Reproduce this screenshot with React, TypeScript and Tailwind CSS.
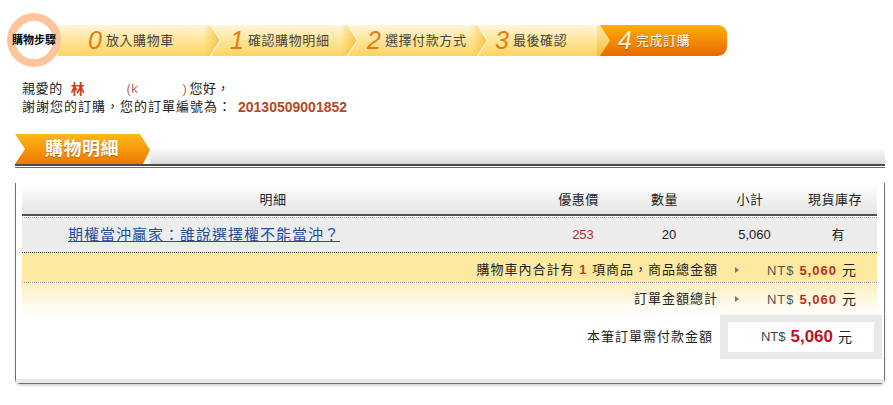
import React from "react";

// chevron shading at the end of each yellow step
function Chevron({ id }: { id: string }) {
  return (
    <svg width="18" height="31" viewBox="0 0 18 31" className="block shrink-0">
      <defs>
        <linearGradient id={id} x1="0" y1="0" x2="1" y2="0">
          <stop offset="0" stopColor="#f8c540" stopOpacity="0" />
          <stop offset="1" stopColor="#f5bd3e" stopOpacity="0.85" />
        </linearGradient>
      </defs>
      <polygon points="0,0 7,0 17,15.5 7,31 0,31" fill={`url(#${id})`} />
      <polyline points="7.5,0 17.5,15.5 7.5,31" fill="none" stroke="#fff7dc" strokeWidth="1.2" />
    </svg>
  );
}

function Step({ n, label, className }: { n: string; label: string; className: string }) {
  return (
    <div className={`flex h-full shrink-0 items-center ${className}`}>
      <span className="mr-[4px] text-[25px] italic leading-none text-[#e47c12]">{n}</span>
      <span className="text-[13px] leading-none tracking-[0.6px] text-[#444]">{label}</span>
    </div>
  );
}

function Arrow() {
  return (
    <div className="flex w-[38px] justify-center">
      <span className="block h-0 w-0 border-y-[3px] border-l-[4px] border-y-transparent border-l-[#777]" />
    </div>
  );
}

function Amount() {
  return (
    <div className="w-[101px] text-right whitespace-nowrap">
      <span className="text-[13px] text-[#555]">NT$</span>
      <span className="ml-[5px] text-[13px] font-bold text-[#b8321c]">5,060</span>
      <span className="ml-[5px] text-[14px]">元</span>
    </div>
  );
}

export default function App() {
  return (
    <div className="h-[405px] w-[893px] overflow-hidden bg-white text-[13px] text-[#222] [font-family:'Liberation_Sans','Noto_Sans_CJK_TC',sans-serif]">
      {/* STEPS */}
      <div className="flex items-center pl-[7px] pt-[13px]">
        <div className="relative z-10 flex h-[54px] w-[54px] shrink-0 items-center justify-center rounded-full border-[8px] border-[#fcc59c] bg-white">
          <span className="whitespace-nowrap text-[11px] font-bold leading-none text-black">購物步驟</span>
        </div>
        <div className="-ml-[3px] flex h-[31px]">
          <div className="flex h-full bg-gradient-to-b from-[#fff6da] via-[#ffe597] to-[#fdd462]">
            <Step n="0" label="放入購物車" className="w-[145px] pl-[30px]" />
            <Chevron id="c0" />
            <Step n="1" label="確認購物明細" className="w-[119px] pl-[9px]" />
            <Chevron id="c1" />
            <Step n="2" label="選擇付款方式" className="w-[112px] pl-[9px]" />
            <Chevron id="c2" />
            <Step n="3" label="最後確認" className="w-[109px] pl-[7px]" />
          </div>
          <div className="flex h-full w-[130px] items-center rounded-r-[9px] bg-gradient-to-b from-[#fdae0a] to-[#e96800]">
            <svg width="14" height="31" viewBox="0 0 14 31" className="block shrink-0">
              <defs>
                <linearGradient id="tip" x1="0" y1="0" x2="0" y2="1">
                  <stop offset="0" stopColor="#fdeaa8" />
                  <stop offset="1" stopColor="#f6be3a" />
                </linearGradient>
              </defs>
              <polygon points="0,0 3,0 13,15.5 3,31 0,31" fill="url(#tip)" />
            </svg>
            <span className="ml-[7px] mr-[4px] text-[25px] italic leading-none text-[#fbeede] [text-shadow:0_1px_1px_rgba(120,50,0,0.4)]">4</span>
            <span className="text-[13px] leading-none tracking-[0.6px] text-white [text-shadow:0_1px_1px_rgba(120,50,0,0.4)]">完成訂購</span>
          </div>
        </div>
      </div>

      {/* GREETING */}
      <div className="mt-[13px] pl-[22px] text-[13px] leading-[18px]">
        <div className="flex items-center tracking-[0.6px]">
          <span>親愛的</span>
          <span className="ml-[8px] text-[14px] font-bold text-[#c2401c]">林</span>
          <span className="w-[41px]" />
          <span className="text-[#c7655a]">(k</span>
          <span className="w-[44px]" />
          <span className="text-[#c7655a]">)</span>
          <span className="ml-[2px]">您好，</span>
        </div>
        <div className="flex items-center tracking-[1px]">
          <span>謝謝您的訂購，您的訂單編號為：</span>
          <span className="ml-[6px] text-[14px] font-bold tracking-normal text-[#b9471c]">20130509001852</span>
        </div>
      </div>

      {/* SECTION TITLE */}
      <div className="ml-[15px] mr-[8px] mt-[18px]">
        <div className="flex h-[30px] items-end">
          <div className="flex h-[30px] w-[135px] shrink-0 items-center bg-gradient-to-b from-[#fcb817] to-[#ef7800] pl-[30px] [clip-path:polygon(0_0,125px_0,135px_16px,128px_30px,0_30px,10px_15px)]">
            <span className="text-[18px] font-bold leading-none tracking-[0.5px] text-white [text-shadow:0_1px_1px_rgba(140,60,0,0.5)]">購物明細</span>
          </div>
          <div className="h-[15px] flex-1 rounded-tr-[3px] bg-gradient-to-b from-[#fafafa] to-[#dcdcdc]" />
        </div>
        <div className="h-[2px] bg-[#4a4a4a]" />
        <div className="mt-[1px] h-[1px] bg-[#6a6a6a]" />
      </div>

      {/* DETAIL BOX */}
      <div className="ml-[15px] mt-[15px] flex h-[201px] w-[870px] flex-col rounded-b-[5px] border-x border-b border-[#707070] shadow-[0_2px_2px_rgba(0,0,0,0.15)]">
        <div className="pl-[6px] pr-[7px] pt-[2px]">
          {/* header */}
          <div className="grid h-[29px] grid-cols-[513px_87px_85px_86px_84px] items-center bg-gradient-to-b from-white to-[#e4e4e4] text-center tracking-[0.5px]">
            <div className="pr-[11px]">明細</div>
            <div>優惠價</div>
            <div>數量</div>
            <div>小計</div>
            <div>現貨庫存</div>
          </div>
          <div className="h-[2px] bg-[#505050]" />
          <div className="mt-[1px] h-0 border-t border-dotted border-[#999]" />

          {/* item */}
          <div className="grid h-[34px] grid-cols-[513px_87px_85px_86px_84px] items-center bg-[#ececec] text-center">
            <div className="pl-[46px] text-left">
              <a href="#" className="text-[15px] tracking-[1px] text-[#1b4f9c] underline">
                期權當沖贏家：誰說選擇權不能當沖？
              </a>
            </div>
            <div className="pl-[9px] text-[#a83232]">253</div>
            <div className="pl-[9px]">20</div>
            <div className="pl-[9px]">5,060</div>
            <div className="pl-[6px]">有</div>
          </div>
          <div className="h-0 border-t border-dotted border-[#333]" />

          {/* totals */}
          <div className="flex h-[29px] items-center bg-[#fee9a0] pr-[20px] pt-[5px] tracking-[1px]">
            <div className="flex-1 text-right">
              購物車內合計有 <span className="font-bold text-[#c2401c]">1</span> 項商品，商品總金額
            </div>
            <Arrow />
            <Amount />
          </div>
          <div className="h-0 border-t border-dotted border-[#999]" />
          <div className="flex h-[32px] items-center bg-gradient-to-b from-[#fdefbf] to-white pr-[20px] tracking-[1px]">
            <div className="flex-1 text-right">訂單金額總計</div>
            <Arrow />
            <Amount />
          </div>

          {/* pay */}
          <div className="-mr-[5px] flex h-[44px] items-center">
            <div className="flex-1 pr-[7px] text-right tracking-[1px]">本筆訂單需付款金額</div>
            <div className="h-[44px] w-[162px] bg-[#e9e9e9] px-[8px] py-[7px]">
              <div className="flex h-full items-center justify-end bg-white pr-[22px] whitespace-nowrap">
                <span className="text-[13px] text-[#444]">NT$</span>
                <span className="ml-[5px] text-[17px] font-bold text-[#c0102a]">5,060</span>
                <span className="ml-[5px] text-[14px]">元</span>
              </div>
            </div>
          </div>
        </div>
        <div className="mt-auto h-[4px] bg-[#e8e8e8]" />
      </div>
    </div>
  );
}
